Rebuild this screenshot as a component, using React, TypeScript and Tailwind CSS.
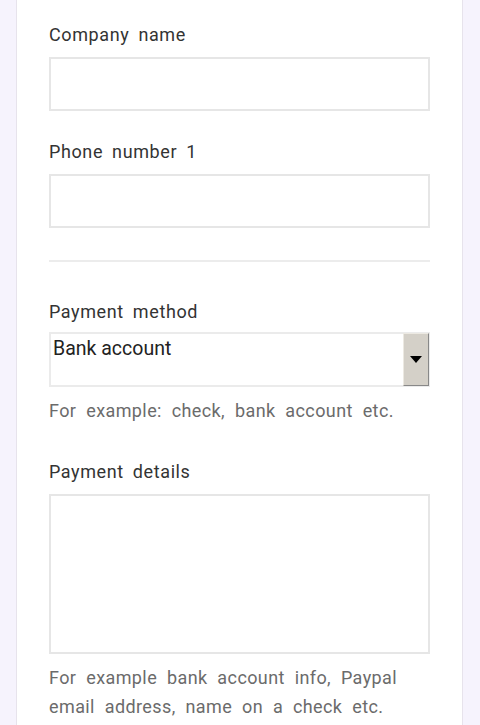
import React from 'react';

const labelCls = "block text-[18px] leading-[24px] text-[#333] tracking-[0.6px] [word-spacing:4px]";
const helpCls = "text-[18px] leading-[29px] text-[#6b6b6b] tracking-[0.4px] [word-spacing:5px]";
const inputCls = "block w-full h-[54px] border-2 border-[#e6e6e6] bg-white outline-none";

const Field = ({ label, className }: { label: string; className?: string }) => (
  <div className={className}>
    <label className={labelCls}>{label}</label>
    <input type="text" className={inputCls + " mt-[10px]"} />
  </div>
);

export default function App() {
  return (
    <div className="min-h-[725px] bg-[#f6f3fd] font-['Roboto',sans-serif]">
      <div className="ml-[16px] w-[447px] min-h-[725px] bg-white border-x border-[#e7e3ec] pl-[32px] pr-[32px] pt-[23px]">
        <div className="w-[381px]">
          <Field label="Company name" />
          <Field label="Phone number 1" className="mt-[29px]" />

          <div className="mt-[32px] h-[2px] bg-[#ececec]" />

          <div className="mt-[38px]">
            <label className={labelCls}>Payment method</label>
            <div className="mt-[8px] flex h-[55px] border-2 border-[#ebebeb] bg-white">
              <span className="flex-1 pl-[2px] pt-[3px] text-[19.5px] leading-[24px] text-[#222]">Bank account</span>
              <div className="my-[-1px] mr-[-1px] w-[26px] flex items-center justify-center bg-[#d4d0c8] border border-t-[#ece9e2] border-l-[#ece9e2] border-r-[#888] border-b-[#888]">
                <svg width="12" height="7" viewBox="0 0 12 7">
                  <path d="M0 0h12L6 7z" fill="#000" />
                </svg>
              </div>
            </div>
            <p className={helpCls + " mt-[9px]"}>For example: check, bank account etc.</p>
          </div>

          <div className="mt-[35px]">
            <label className={labelCls}>Payment details</label>
            <textarea className="mt-[10px] block w-full h-[160px] border-2 border-[#e6e6e6] bg-white outline-none resize-none" />
            <p className={helpCls + " mt-[9px]"}>
              For example bank account info, Paypal email address, name on a check etc.
            </p>
          </div>
        </div>
      </div>
    </div>
  );
}
